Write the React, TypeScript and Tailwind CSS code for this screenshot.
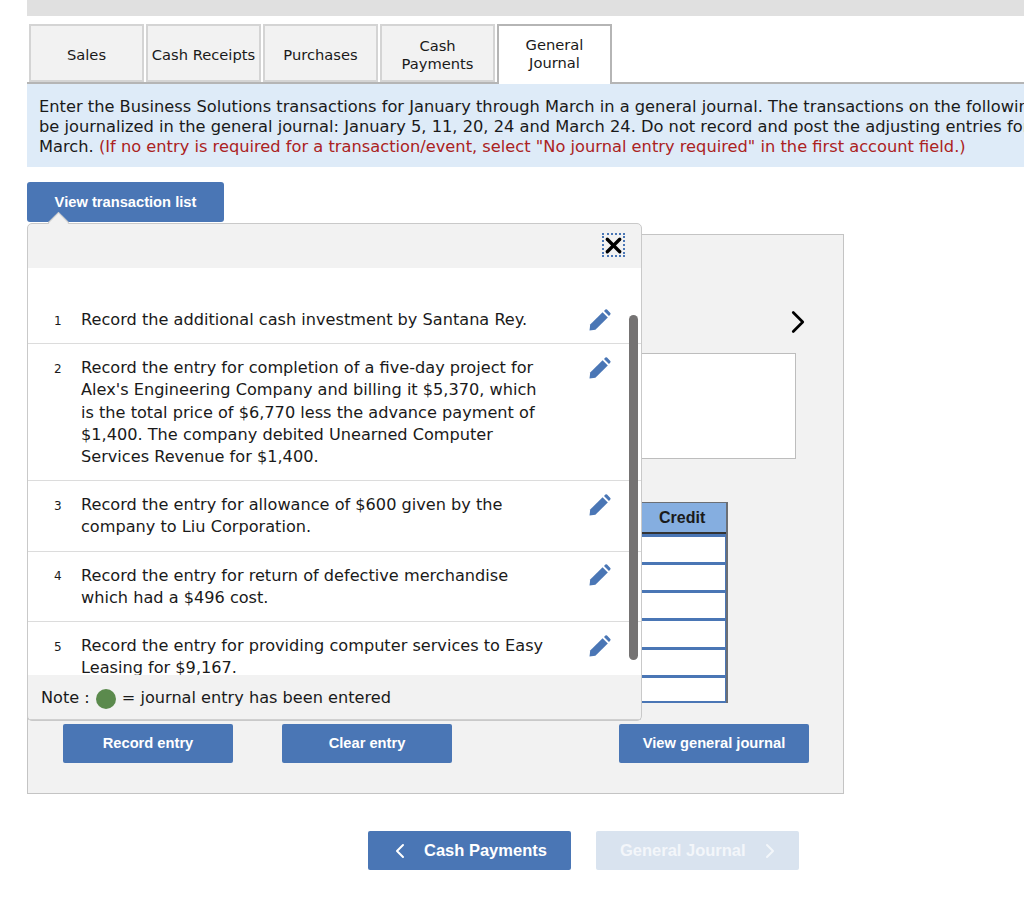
import { ChevronLeft, ChevronRight, X } from 'lucide-react';

const tabs = [
  { label: 'Sales' },
  { label: 'Cash Receipts' },
  { label: 'Purchases' },
  { label: 'Cash Payments', narrow: true },
  { label: 'General Journal', narrow: true, active: true },
];

const transactions = [
  { no: 1, lines: ['Record the additional cash investment by Santana Rey.'] },
  {
    no: 2,
    lines: [
      'Record the entry for completion of a five-day project for',
      "Alex's Engineering Company and billing it $5,370, which",
      'is the total price of $6,770 less the advance payment of',
      '$1,400. The company debited Unearned Computer',
      'Services Revenue for $1,400.',
    ],
  },
  { no: 3, lines: ['Record the entry for allowance of $600 given by the', 'company to Liu Corporation.'] },
  { no: 4, lines: ['Record the entry for return of defective merchandise', 'which had a $496 cost.'] },
  { no: 5, lines: ['Record the entry for providing computer services to Easy', 'Leasing for $9,167.'] },
];

function Pencil() {
  return (
    <svg viewBox="0 0 22 22" className="h-[22px] w-[22px] fill-[#4a76b5]">
      <path d="M0.5 21.5 L1.2 15.6 L13.6 3.2 L18.8 8.4 L6.4 20.8 Z" />
      <path d="M15 1.9 L16.4 0.6 Q17.2 0 18 0.6 L21.3 3.9 Q22 4.7 21.3 5.5 L20 7 Z" />
    </svg>
  );
}

function BlueButton({ label, className }: { label: string; className: string }) {
  return (
    <button className={`h-[39px] rounded-[2px] bg-[#4a76b5] text-center font-['Liberation_Sans',sans-serif] text-[14.7px] font-bold text-white ${className}`}>
      {label}
    </button>
  );
}

export default function App() {
  return (
    <div className="h-[917px] w-[1024px] overflow-hidden bg-white pl-[27px] font-['DejaVu_Sans',sans-serif] text-[#1a1a1a]">
      <div className="h-4 bg-[#e0e0e0]" />

      <div className="flex h-[58px] gap-[2px] pl-[2px] pt-2 box-content">
        {tabs.map((t) => (
          <div
            key={t.label}
            className={`relative flex h-[58px] w-[115px] items-center justify-center border-2 text-center text-[14.7px] leading-[18px] ${
              t.active ? 'z-10 h-[60px] border-[#b5b5b5] border-b-0 bg-white pb-[2px]' : 'border-[#d4d4d4] bg-[#f2f2f2] pt-[3px]'
            } ${t.narrow ? 'px-5' : 'whitespace-nowrap'}`}
          >
            {t.label}
          </div>
        ))}
      </div>

      <div className="h-[85px] border-t-2 border-[#b5b5b5] bg-[#deebf8] pl-3 pt-[13px] text-[16.25px] leading-[20px] whitespace-nowrap">
        Enter the Business Solutions transactions for January through March in a general journal. The transactions on the following
        <br />
        be journalized in the general journal: January 5, 11, 20, 24 and March 24. Do not record and post the adjusting entries for
        <br />
        March. <span className="text-[#ab2222]">(If no entry is required for a transaction/event, select "No journal entry required" in the first account field.)</span>
      </div>

      <button className="mt-[15px] block h-10 w-[197px] rounded-[3px] bg-[#4a76b5] pt-[1px] font-['Liberation_Sans',sans-serif] text-[14.7px] font-bold text-white">
        View transaction list
      </button>

      <div className="relative mt-3 h-[560px] w-[817px] border border-[#c4c4c4] bg-[#f2f2f2]">
        {/* everything behind the popover */}
        <div className="flex h-[558px] flex-col items-end">
          <ChevronRight className="mr-[26px] mt-[68px] h-[38px] w-[38px] text-black" strokeWidth={1.7} />
          <div className="mr-[47px] mt-[12px] h-[106px] w-[400px] border border-[#bdbdbd] bg-white" />
          <div className="mr-[115px] mt-[43px] w-[300px] border-r-2 border-[#6b6f75]">
            <div className="h-[32px] border-t border-b-2 border-t-[#6b6f75] border-b-[#333] bg-[#85aee0] pl-[231px] font-['Liberation_Sans',sans-serif] text-[16px] font-bold leading-[30px] whitespace-nowrap">
              Credit
            </div>
            {[0, 1, 2, 3, 4, 5].map((i) => (
              <div key={i} className="h-[28.17px] border-t-[3px] border-r border-[#4a76b5] bg-white last:border-b-2" />
            ))}
          </div>
          <div className="mt-[21px] flex h-[39px] w-full pl-[35px]">
            <BlueButton label="Record entry" className="w-[170px]" />
            <BlueButton label="Clear entry" className="ml-[49px] w-[170px]" />
            <BlueButton label="View general journal" className="ml-[167px] w-[190px]" />
          </div>
        </div>

        {/* transaction list popover */}
        <div className="absolute left-[-1px] top-[-12px] z-20 flex h-[498px] w-[615px] flex-col rounded-[5px] border border-[#c9c9c9] bg-[#f2f2f2]">
          <div className="absolute left-[23px] top-[-9px] h-[15px] w-[15px] rotate-45 border-l border-t border-[#c9c9c9] bg-[#f2f2f2]" />
          <div className="relative h-[44px] shrink-0">
            <div className="absolute right-[16px] top-[9px] flex h-[24px] w-[23px] items-center justify-center border-2 border-dotted border-[#4a76b5]">
              <X className="h-[25px] w-[25px] shrink-0 text-black" strokeWidth={3.2} />
            </div>
          </div>
          <div className="relative h-[407px] shrink-0 overflow-hidden bg-white pt-[28px]">
            {transactions.map((t) => (
              <div key={t.no} className="relative border-b border-[#dcdcdc] pb-[12px] pl-[26px] pt-[13px] text-[16.15px] leading-[22.2px] whitespace-nowrap">
                <span className="absolute left-[26px] top-[13.5px] text-[12px]">{t.no}</span>
                <div className="pl-[27px]">
                  {t.lines.map((l) => (
                    <div key={l}>{l}</div>
                  ))}
                </div>
                <div className="absolute left-[561px] top-[12.5px]">
                  <Pencil />
                </div>
              </div>
            ))}
            <div className="absolute left-[601px] top-[47px] h-[345px] w-[9px] rounded-[5px] bg-[#757373]" />
          </div>
          <div className="flex h-[45px] shrink-0 items-center border-b border-[#d0d0d0] pl-[13px] pt-[3px] text-[16.15px]">
            Note :
            <span className="mx-[6px] inline-block h-5 w-5 rounded-full bg-[#5b8a4d]" />
            = journal entry has been entered
          </div>
        </div>
      </div>

      <div className="mt-[37px] flex pl-[341px] font-['Liberation_Sans',sans-serif]">
        <button className="flex h-[39px] w-[203px] items-center gap-3 rounded-[2px] bg-[#4a76b5] pl-5 text-[16.5px] font-bold text-white">
          <ChevronLeft className="h-6 w-6" strokeWidth={2} />
          Cash Payments
        </button>
        <button className="ml-[25px] flex h-[39px] w-[203px] items-center gap-3 rounded-[2px] bg-[#d9e3ef] pl-6 text-[16.5px] font-bold text-[#f3f6fa]">
          General Journal
          <ChevronRight className="h-6 w-6" strokeWidth={2} />
        </button>
      </div>
    </div>
  );
}
